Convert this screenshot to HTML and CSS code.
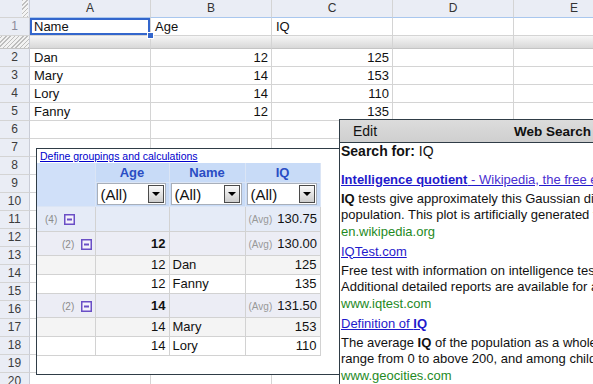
FILE: index.html
```html
<!DOCTYPE html>
<html lang="en">
<head>
  <meta charset="UTF-8" />
  <title>Spreadsheet - Pivot and Web Search</title>
  <link rel="stylesheet" href="styles.css">
</head>
<body>
  <div class="sheet">
    <div class="row head">
      <div class="rh corner"></div>
      <div>A</div><div>B</div><div>C</div><div>D</div><div>E</div>
    </div>
    <div class="row">
      <div class="rh frozen">1</div>
      <div class="sel">Name<span class="handle"></span></div>
      <div>Age</div><div>IQ</div><div></div><div></div>
    </div>
    <div class="row freeze">
      <div class="rh"></div><div></div><div></div><div></div><div></div><div></div>
    </div>
    <div class="row"><div class="rh">2</div><div>Dan</div><div class="num">12</div><div class="num">125</div><div></div><div></div></div>
    <div class="row"><div class="rh">3</div><div>Mary</div><div class="num">14</div><div class="num">153</div><div></div><div></div></div>
    <div class="row"><div class="rh">4</div><div>Lory</div><div class="num">14</div><div class="num">110</div><div></div><div></div></div>
    <div class="row"><div class="rh">5</div><div>Fanny</div><div class="num">12</div><div class="num">135</div><div></div><div></div></div>
    <div class="row"><div class="rh">6</div><div></div><div></div><div></div><div></div><div></div></div>
    <div class="row"><div class="rh">7</div><div></div><div></div><div></div><div></div><div></div></div>
    <div class="row"><div class="rh">8</div><div></div><div></div><div></div><div></div><div></div></div>
    <div class="row"><div class="rh">9</div><div></div><div></div><div></div><div></div><div></div></div>
    <div class="row"><div class="rh">10</div><div></div><div></div><div></div><div></div><div></div></div>
    <div class="row"><div class="rh">11</div><div></div><div></div><div></div><div></div><div></div></div>
    <div class="row"><div class="rh">12</div><div></div><div></div><div></div><div></div><div></div></div>
    <div class="row"><div class="rh">13</div><div></div><div></div><div></div><div></div><div></div></div>
    <div class="row"><div class="rh">14</div><div></div><div></div><div></div><div></div><div></div></div>
    <div class="row"><div class="rh">15</div><div></div><div></div><div></div><div></div><div></div></div>
    <div class="row"><div class="rh">16</div><div></div><div></div><div></div><div></div><div></div></div>
    <div class="row"><div class="rh">17</div><div></div><div></div><div></div><div></div><div></div></div>
    <div class="row"><div class="rh">18</div><div></div><div></div><div></div><div></div><div></div></div>
    <div class="row"><div class="rh">19</div><div></div><div></div><div></div><div></div><div></div></div>
    <div class="row"><div class="rh">20</div><div></div><div></div><div></div><div></div><div></div></div>
  </div>

  <div class="pivot">
    <a class="define" href="#">Define groupings and calculations</a>
    <table class="pt">
      <colgroup><col class="w-tree"><col class="w-age"><col class="w-name"><col class="w-iq"></colgroup>
      <tr class="lbl">
        <th class="blank" rowspan="2"></th><th>Age</th><th>Name</th><th>IQ</th>
      </tr>
      <tr class="flt">
        <td><div class="dd">(All)<span class="arr"></span></div></td>
        <td><div class="dd">(All)<span class="arr"></span></div></td>
        <td><div class="dd">(All)<span class="arr"></span></div></td>
      </tr>
      <tr class="total">
        <td class="tree"><span class="cnt">(4)</span><svg class="minus" width="11" height="11" viewBox="0 0 11 11"><rect x="0.75" y="0.75" width="9.5" height="9.5" fill="#f4f2fb" stroke="#6a4fc6" stroke-width="1.5"/><rect x="3" y="4.5" width="5" height="2" fill="#6a4fc6"/></svg></td>
        <td></td><td></td>
        <td class="num"><span class="avg">(Avg)</span>130.75</td>
      </tr>
      <tr class="grp">
        <td class="tree lvl2"><span class="cnt">(2)</span><svg class="minus" width="11" height="11" viewBox="0 0 11 11"><rect x="0.75" y="0.75" width="9.5" height="9.5" fill="#f4f2fb" stroke="#6a4fc6" stroke-width="1.5"/><rect x="3" y="4.5" width="5" height="2" fill="#6a4fc6"/></svg></td>
        <td class="num key">12</td><td></td>
        <td class="num"><span class="avg">(Avg)</span>130.00</td>
      </tr>
      <tr class="odd"><td></td><td class="num">12</td><td>Dan</td><td class="num">125</td></tr>
      <tr><td></td><td class="num">12</td><td>Fanny</td><td class="num">135</td></tr>
      <tr class="grp">
        <td class="tree lvl2"><span class="cnt">(2)</span><svg class="minus" width="11" height="11" viewBox="0 0 11 11"><rect x="0.75" y="0.75" width="9.5" height="9.5" fill="#f4f2fb" stroke="#6a4fc6" stroke-width="1.5"/><rect x="3" y="4.5" width="5" height="2" fill="#6a4fc6"/></svg></td>
        <td class="num key">14</td><td></td>
        <td class="num"><span class="avg">(Avg)</span>131.50</td>
      </tr>
      <tr class="odd"><td></td><td class="num">14</td><td>Mary</td><td class="num">153</td></tr>
      <tr><td></td><td class="num">14</td><td>Lory</td><td class="num">110</td></tr>
    </table>
  </div>

  <div class="search">
    <div class="bar"><span>Edit</span><b>Web Search</b></div>
    <div class="results">
      <div class="query"><b>Search for:</b> IQ</div>
      <div class="res">
        <a class="title" href="#"><b>Intelligence quotient</b> <span class="src">- Wikipedia, the free encyclopedia</span></a>
        <div><b>IQ</b> tests give approximately this Gaussian distribution of scores in the</div>
        <div>population. This plot is artificially generated from the formula.</div>
        <div class="url">en.wikipedia.org</div>
      </div>
      <div class="res">
        <a class="title" href="#">IQTest.com</a>
        <div>Free test with information on intelligence testing and results.</div>
        <div>Additional detailed reports are available for a fee.</div>
        <div class="url">www.iqtest.com</div>
      </div>
      <div class="res">
        <a class="title" href="#">Definition of <b>IQ</b></a>
        <div>The average <b>IQ</b> of the population as a whole is 100. Scores can</div>
        <div>range from 0 to above 200, and among children the scale is</div>
        <div class="url">www.geocities.com</div>
      </div>
    </div>
  </div>
</body>
</html>
```

FILE: styles.css
```css
* {
  box-sizing: border-box;
}
body {
  margin: 0;
  height: 384px;
  overflow: hidden;
  position: relative;
  background: #fff;
  font-family: "Liberation Sans", Arial, sans-serif;
  color: #111;
}

/* spreadsheet grid */
.row {
  display: grid;
  grid-template-columns: 30px repeat(5, 121px);
  height: 18px;
}
.row > div {
  border-right: 1px solid #d4d4d4;
  border-bottom: 1px solid #d4d4d4;
  padding: 0 3px 0 4px;
  font-size: 13px;
  line-height: 17px;
  white-space: nowrap;
  overflow: hidden;
}
.row > .num {
  text-align: right;
}
.row > .rh {
  background: #eaedf5;
  border-right-color: #c9ccd6;
  padding: 0;
  text-align: center;
  font-size: 12px;
  color: #3c3c3c;
}
.row > .frozen {
  color: #8a8a9a;
}
.head > div {
  background: #eaedf5;
  border-bottom-color: #a9c7ee;
  padding: 0;
  text-align: center;
  font-size: 12px;
  color: #333;
}
.head > .corner {
  border-bottom-color: #d4d4d4;
  background: repeating-linear-gradient(-45deg, #bfbfbf 0 1px, #f4f4f4 1px 3px) right 1px top / 6px 100% no-repeat, #eaedf5;
}
.freeze {
  height: 13px;
}
.freeze > div {
  background: linear-gradient(#f6f6f6, #d8d8d8);
  border-bottom-color: #c4c4c4;
}
.row.freeze > .rh {
  background: repeating-linear-gradient(-45deg, #bdbdbd 0 1px, #f2f2f2 1px 3px);
}
.row > .sel {
  position: relative;
  overflow: visible;
}
.sel::after {
  content: "";
  position: absolute;
  inset: 0;
  border: 2px solid #3366cc;
}
.handle {
  position: absolute;
  left: 117px;
  top: 14px;
  width: 7px;
  height: 7px;
  background: #3366cc;
  border: 1px solid #fff;
  z-index: 1;
}

/* pivot table panel */
.pivot {
  position: absolute;
  left: 36px;
  top: 148px;
  width: 320px;
  height: 227px;
  border: 1px solid #2f3c46;
  background: #fff;
  z-index: 1;
}
.define {
  display: block;
  padding: 1px 0 0 3px;
  font-size: 10.5px;
  line-height: 13px;
  color: #0000cc;
  text-decoration: underline;
}
.pt {
  border-collapse: collapse;
  table-layout: fixed;
  width: 283px;
  font-size: 13px;
}
.w-tree { width: 58px; }
.w-age { width: 74px; }
.w-name { width: 76px; }
.w-iq { width: 75px; }
.pt th,
.pt td {
  height: 19px;
  border: 1px solid #d2d2d2;
  padding: 0 3px;
  white-space: nowrap;
  overflow: hidden;
}
.pt tr > :first-child {
  border-left: none;
}
.pt th {
  border-top: none;
  background: #c8dbf7;
  border-color: #dbe5f5;
  color: #2a4dc4;
  font-size: 13px;
}
.pt .blank {
  background: #d0e0f9;
}
.pt .flt td {
  height: 24px;
  background: #c8dbf7;
  border-color: #dbe5f5;
  padding: 0 3px 0 1px;
}
.dd {
  display: flex;
  align-items: center;
  justify-content: space-between;
  height: 22px;
  padding-left: 3px;
  border: 1px solid #a8afba;
  background: #fff;
  font-size: 15px;
}
.arr {
  display: flex;
  align-items: center;
  justify-content: center;
  width: 16px;
  height: 18px;
  margin-right: 1px;
  border: 1px solid #4a4a4a;
  background: linear-gradient(#fafafa, #cdcdcd);
}
.arr::after {
  content: "";
  border-left: 4px solid transparent;
  border-right: 4px solid transparent;
  border-top: 4px solid #000;
}
.pt .total td {
  height: 25px;
  background: #e5ebf7;
}
.pt .grp td {
  height: 24px;
  background: #ecedf5;
}
.pt .odd td {
  background: #f4f4f4;
}
.pt .num {
  text-align: right;
}
.pt .key {
  font-weight: bold;
}
.pt .tree {
  padding-left: 8px;
}
.pt .tree.lvl2 {
  padding-left: 25px;
}
.cnt {
  font-size: 10px;
  color: #8b8b8b;
  margin-right: 7px;
}
.minus {
  vertical-align: -2px;
}
.avg {
  font-size: 10px;
  color: #999;
  margin-right: 5px;
}

/* web search panel */
.search {
  position: absolute;
  left: 339px;
  top: 119px;
  width: 300px;
  height: 280px;
  border-left: 1px solid #2f3c46;
  border-top: 1px solid #2f3c46;
  background: #fff;
  z-index: 2;
}
.bar {
  display: flex;
  justify-content: space-between;
  align-items: center;
  width: 254px;
  height: 23px;
  padding: 0 3px 0 13px;
  background: linear-gradient(#dcdcdc, #cfcfcf);
  border-bottom: 1px solid #2f3c46;
  font-size: 14px;
}
.bar b {
  font-size: 13.5px;
}
.results {
  padding-left: 1px;
  font-size: 13px;
  line-height: 16.5px;
  white-space: nowrap;
}
.query {
  font-size: 14px;
  margin-bottom: 12px;
}
.res {
  margin-bottom: 3.5px;
}
.title {
  display: block;
  margin-bottom: 2.5px;
  color: #1f1acc;
  text-decoration: underline;
}
.title .src {
  color: #4a2fd0;
}
.url {
  color: #1f8a1f;
}
```
